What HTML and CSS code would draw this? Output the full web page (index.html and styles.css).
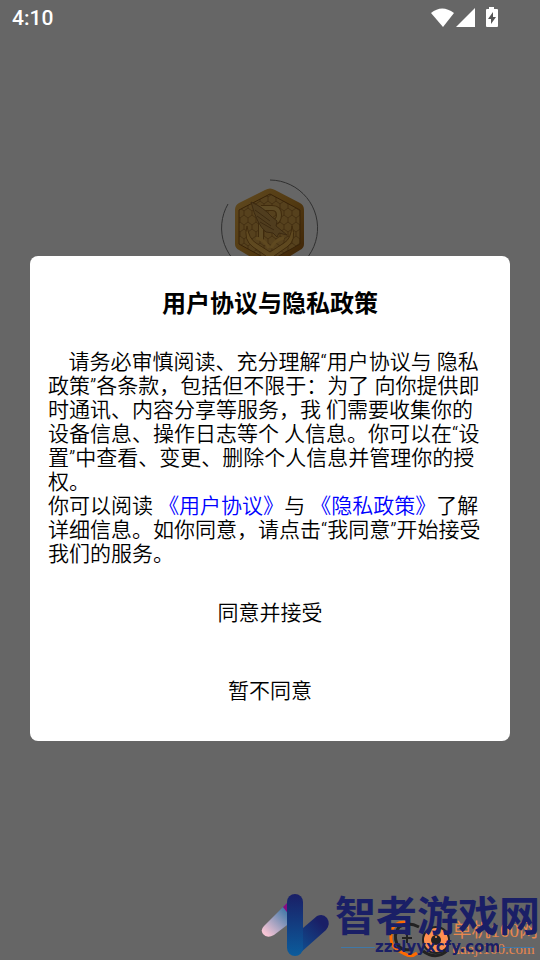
FILE: index.html
```html
<!DOCTYPE html>
<html lang="zh-CN">
<head>
  <meta charset="UTF-8" />
  <meta name="viewport" content="width=device-width, initial-scale=1.0" />
  <title>用户协议与隐私政策</title>
  <link rel="stylesheet" href="styles.css">
</head>
<body>
  <div class="splash">
    <svg class="logo" viewBox="0 0 100 100" aria-hidden="true">
      <defs>
        <linearGradient id="gold" x1="0" y1="0" x2="1" y2="1">
          <stop offset="0" stop-color="#f0b850" />
          <stop offset="0.5" stop-color="#cf922e" />
          <stop offset="1" stop-color="#96560f" />
        </linearGradient>
        <pattern id="comb" width="8" height="14" patternUnits="userSpaceOnUse">
          <rect width="8" height="14" fill="#d8a44a" />
          <path d="M4 0V2L0 5V9L4 12V14M4 2L8 5V9L4 12" fill="none" stroke="#a8762c" stroke-width="1" />
        </pattern>
      </defs>
      <path d="M50 2A48 48 0 1 1 8 26" fill="none" stroke="#777" stroke-width="1" />
      <path d="M45 12Q50 9 55 12L80 25Q84 27 84 32V66Q84 70 80 72L54 88Q50 90 46 88L19 72Q15 70 15 66V32Q15 27 19 25Z" fill="url(#gold)" />
      <path d="M50 16L80 32V66L50 83L19 66V32Z" fill="url(#comb)" stroke="#8a5616" stroke-width="1" />
      <path d="M41 62V44H52Q59 44 59 37Q59 30 52 30H41" fill="none" stroke="#a06c22" stroke-width="6" />
      <path d="M41 62V44H52Q59 44 59 37Q59 30 52 30H41" fill="none" stroke="#e8b85a" stroke-width="4" />
      <path d="M31 24Q43 29 52 39L57 43L56 48L67 57L59 55L57 59L53 55L46 54Q37 47 31 24Z" fill="#c89a4c" stroke="#96682a" />
      <path d="M35 32L50 43M37 38L51 48M40 44L54 52" stroke="#96682a" stroke-width="1" />
      <path d="M27 48Q29 61 36 65L50 74L64 65Q71 61 72 48Q77 62 67 69L54 78V87H46V78L33 69Q23 62 27 48Z" fill="#edb650" stroke="#a06c22" />
      <path d="M36 60Q44 61 49 70M64 60Q56 61 51 70" fill="none" stroke="#edb650" stroke-width="3" />
    </svg>
  </div>

  <div class="overlay">
    <header class="status-bar">
      <span class="time">4:10</span>
      <svg class="status-icons" viewBox="0 0 68 22" aria-hidden="true">
        <path d="M0 6Q11 -3 23 6L12 20Z" fill="#fff" />
        <path d="M44 1V20H25Z" fill="#fff" />
        <path d="M58 0H63V2H66Q67 2 67 3V19Q67 20 66 20H56Q55 20 55 19V3Q55 2 56 2H58Z" fill="#fff" />
        <path d="M62 5L57 12H60V17L65 10H62Z" fill="#555" />
      </svg>
    </header>

    <main class="content">
      <section class="dialog" role="dialog" aria-labelledby="dialog-title">
        <h1 id="dialog-title">用户协议与隐私政策</h1>
        <div class="message">
          <p>&nbsp;&nbsp;&nbsp;&nbsp;请务必审慎阅读、充分理解“用户协议与 隐私政策”各条款，包括但不限于：为了 向你提供即时通讯、内容分享等服务，我 们需要收集你的设备信息、操作日志等个 人信息。你可以在“设置”中查看、变更、删除个人信息并管理你的授权。</p>
          <p>你可以阅读 <a href="#">《用户协议》</a>与 <a href="#">《隐私政策》</a>了解详细信息。如你同意，请点击“我同意”开始接受我们的服务。</p>
        </div>
        <button class="btn" type="button">同意并接受</button>
        <button class="btn" type="button">暂不同意</button>
      </section>
    </main>
  </div>

  <div class="mark mark-orange">
    <svg class="mark-icon" viewBox="0 0 66 45" aria-hidden="true">
      <path d="M23 8Q10 5 6 15Q3 25 8 32Q13 37 19 39Q25 43 31 38" fill="none" stroke="#ff6a00" stroke-width="3" />
      <path d="M33 12Q22 6 13 12Q7 20 11 29Q16 37 27 34" fill="none" stroke="#222" stroke-width="3" />
      <path d="M21 19V28M16 23H26" stroke="#222" stroke-width="2" />
      <circle cx="50" cy="25" r="13" fill="#ff9050" stroke="#222" stroke-width="2" />
      <circle cx="50" cy="25" r="5" fill="#222" />
      <circle cx="50" cy="22" r="1" fill="#ff9050" />
      <path d="M37 36Q50 46 62 35" fill="none" stroke="#222" stroke-width="3" />
    </svg>
    <div class="mark-text">
      <span>单机100网</span>
      <span class="mark-url">danji100.com</span>
    </div>
  </div>

  <div class="mark mark-blue">
    <svg class="mark-logo" viewBox="0 0 70 66" aria-hidden="true">
      <defs>
        <linearGradient id="pink" x1="0" y1="1" x2="1" y2="0">
          <stop offset="0.1" stop-color="#f5c4d4" />
          <stop offset="0.7" stop-color="#3f78a8" />
          <stop offset="1" stop-color="#105090" />
        </linearGradient>
        <linearGradient id="navy" x1="0" y1="0" x2="0" y2="1">
          <stop offset="0" stop-color="#1a1f66" />
          <stop offset="1" stop-color="#0b5c9c" />
        </linearGradient>
        <linearGradient id="arm" x1="0" y1="1" x2="1" y2="0">
          <stop offset="0" stop-color="#0b5c9c" />
          <stop offset="0.8" stop-color="#1a1f66" />
        </linearGradient>
      </defs>
      <path d="M3 32L29 6L38 22L13 41Q6 45 2 40Q-1 36 3 32Z" fill="url(#pink)" />
      <path d="M22 13L29 6V22Z" fill="#8a0a80" />
      <path d="M28 46L56 22Q62 19 66 24Q70 30 65 36L38 60Z" fill="url(#arm)" />
      <rect x="26" y="0" width="16" height="62" rx="8" fill="url(#navy)" />
    </svg>
    <div class="mark-text">
      <span>智者游戏网</span>
      <span class="mark-url">zzslyyxcfy.com</span>
    </div>
  </div>
</body>
</html>
```
FILE: styles.css
```css
* {
  box-sizing: border-box;
}

body {
  margin: 0;
  min-height: 100vh;
  position: relative;
  overflow: hidden;
  background: #fff;
  color: #000;
  font-family: Roboto, "Noto Sans CJK SC", sans-serif;
  font-size: 21px;
  line-height: 24px;
}

.splash {
  display: flex;
  justify-content: center;
  padding-top: 178px;
}

.logo {
  width: 100px;
  height: 100px;
}

.overlay {
  position: absolute;
  inset: 0;
  display: flex;
  flex-direction: column;
  background: rgba(0, 0, 0, 0.6);
}

.status-bar {
  display: flex;
  align-items: center;
  justify-content: space-between;
  height: 36px;
  padding: 0 41px 0 12px;
  color: #fff;
}

.time {
  font-weight: 500;
}

.status-icons {
  width: 68px;
  height: 22px;
}

.content {
  flex: 1;
  display: flex;
  align-items: center;
  padding: 0 30px;
}

.dialog {
  display: flex;
  flex-direction: column;
  align-items: center;
  width: 100%;
  padding: 36px 18px 34px;
  border-radius: 8px;
  background: #fff;
}

h1 {
  margin: 0 0 34px;
  font-size: 24px;
  line-height: 24px;
  font-weight: 700;
}

.message {
  width: 100%;
  margin-bottom: 31px;
  font-weight: 350;
}

.message p {
  margin: 0;
}

.message a {
  color: #00f;
  text-decoration: none;
}

.btn {
  padding: 4px 20px;
  border: none;
  background: none;
  color: #000;
  font: inherit;
  font-weight: 350;
}

.btn + .btn {
  margin-top: 46px;
}

/* site marks, stacked over the bottom right corner */
.mark {
  position: absolute;
  right: 0;
  bottom: 0;
  display: flex;
  white-space: nowrap;
}

.mark-text {
  display: flex;
  flex-direction: column;
}

.mark-orange {
  color: #e8874f;
  font-family: "Liberation Serif", "Noto Sans CJK SC", serif;
  font-size: 19px;
  line-height: 20px;
}

.mark-orange .mark-text {
  padding: 6px 2px 0 0;
}

.mark-orange .mark-url {
  font-size: 15px;
  line-height: 16px;
}

.mark-icon {
  width: 66px;
  height: 45px;
}

.mark-blue {
  gap: 4px;
  color: #1a1f66;
  font-size: 41px;
  line-height: 40px;
  font-weight: 700;
}

.mark-blue .mark-text {
  padding-top: 3px;
}

.mark-blue .mark-url {
  display: flex;
  align-items: center;
  padding: 0 6px;
  font-family: "DejaVu Sans", sans-serif;
  font-size: 15px;
  line-height: 20px;
  font-weight: bold;
}

.mark-blue .mark-url::before,
.mark-blue .mark-url::after {
  content: "";
  flex: 1;
  height: 1px;
  background: #3f78a8;
}

.mark-logo {
  width: 70px;
  height: 66px;
}
```
